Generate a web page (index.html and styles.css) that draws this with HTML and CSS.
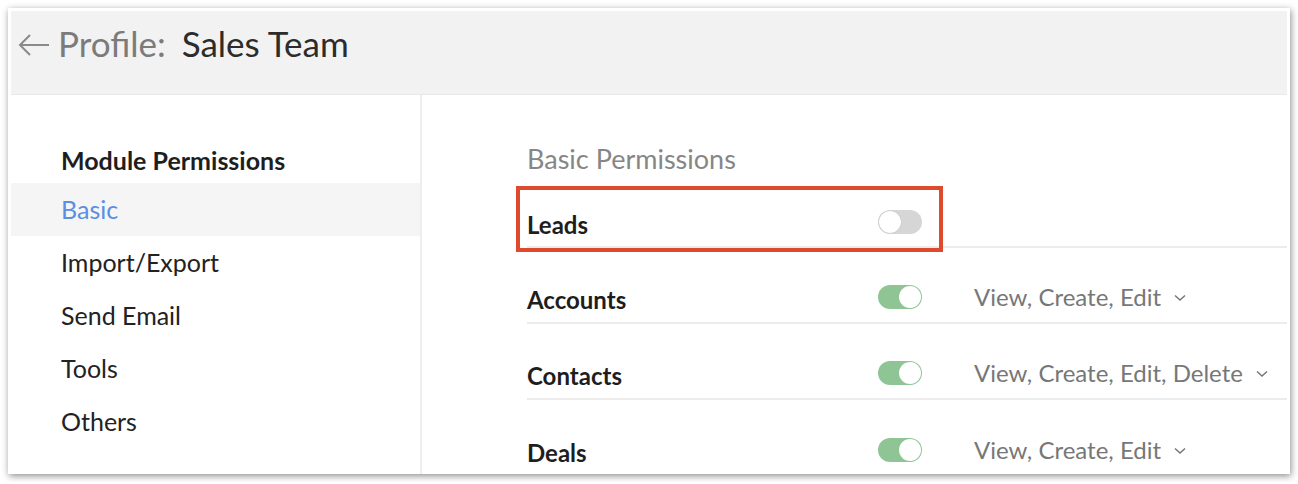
FILE: index.html
```html
<!DOCTYPE html>
<html>
<head>
<meta charset="utf-8">
<link rel="stylesheet" href="styles.css">
</head>
<body>
<div class="card">
  <div class="header">
    <svg class="back" width="32" height="24" viewBox="0 0 32 24"><path d="M2 12 H31 M12 2 L2 12 L12 22" fill="none" stroke="#8a8a8a" stroke-width="2"/></svg>
    <span class="crumb">Profile:</span>
    <span class="title">Sales Team</span>
  </div>
  <div class="main">
    <div class="sidebar">
      <div class="side-title">Module Permissions</div>
      <div class="side-item active">Basic</div>
      <div class="side-item">Import/Export</div>
      <div class="side-item">Send Email</div>
      <div class="side-item">Tools</div>
      <div class="side-item">Others</div>
    </div>
    <div class="content">
      <div class="section-title">Basic Permissions</div>
      <div class="row first">
        <div class="label">Leads</div>
        <div class="toggle off"><span class="knob"></span></div>
        <div class="highlight"></div>
      </div>
      <div class="row">
        <div class="label">Accounts</div>
        <div class="toggle on"><span class="knob"></span></div>
        <div class="perm">View, Create, Edit <svg class="chev" width="12" height="8" viewBox="0 0 12 8"><path d="M1 1.5 L6 6 L11 1.5" fill="none" stroke="#777" stroke-width="1.5"/></svg></div>
      </div>
      <div class="row">
        <div class="label">Contacts</div>
        <div class="toggle on"><span class="knob"></span></div>
        <div class="perm">View, Create, Edit, Delete <svg class="chev" width="12" height="8" viewBox="0 0 12 8"><path d="M1 1.5 L6 6 L11 1.5" fill="none" stroke="#777" stroke-width="1.5"/></svg></div>
      </div>
      <div class="row last">
        <div class="label">Deals</div>
        <div class="toggle on"><span class="knob"></span></div>
        <div class="perm">View, Create, Edit <svg class="chev" width="12" height="8" viewBox="0 0 12 8"><path d="M1 1.5 L6 6 L11 1.5" fill="none" stroke="#777" stroke-width="1.5"/></svg></div>
      </div>
    </div>
  </div>
</div>
</body>
</html>
```
FILE: styles.css
```css
html, body {
  margin: 0;
  padding: 0;
  background: #ffffff;
}
body {
  padding: 8px;
  font-family: Lato, "Open Sans", "Liberation Sans", sans-serif;
}
.card {
  width: 1276px;
  height: 463px;
  padding: 3px 3px 0 3px;
  background: #fff;
  box-shadow: 1px 2px 7px rgba(0,0,0,0.45);
  overflow: hidden;
}
.header {
  background: #f2f2f2;
  border-bottom: 1px solid #e9e9e9;
  display: flex;
  align-items: flex-start;
  padding-left: 7px;
  padding-top: 11px;
  box-sizing: border-box;
  height: 84px;
}
.back {
  margin-right: 8px;
  margin-top: 11px;
}
.crumb {
  font-size: 35px;
  line-height: 42px;
  color: #7b7b7b;
  margin-right: 16px;
}
.title {
  font-size: 35px;
  line-height: 42px;
  color: #2c2c2c;
}
.main {
  display: flex;
  height: 379px;
}
.sidebar {
  width: 409px;
  border-right: 2px solid #eeeeee;
  padding-top: 50px;
}
.side-title {
  font-size: 25px;
  font-weight: bold;
  color: #1e1e1e;
  line-height: 30px;
  padding-left: 50px;
  margin-bottom: 8px;
}
.side-item {
  font-size: 25px;
  color: #222;
  height: 53px;
  line-height: 52px;
  padding-left: 50px;
}
.side-item.active {
  background: #f5f5f5;
  color: #5a8fe3;
}
.content {
  flex: 1;
  padding-left: 105px;
  padding-top: 50px;
}
.section-title {
  font-size: 27px;
  color: #868686;
  line-height: 28px;
  height: 27px;
}
.row {
  position: relative;
  display: flex;
  align-items: center;
  padding-top: 30px;
  box-sizing: border-box;
  height: 76px;
  border-bottom: 2px solid #ececec;
}
.row.first {
  padding-top: 32px;
}
.row.last {
  border-bottom: none;
}
.label {
  width: 351px;
  font-size: 24px;
  font-weight: bold;
  color: #1e1e1e;
  line-height: 28px;
}
.toggle {
  width: 44px;
  height: 24px;
  border-radius: 12px;
  position: relative;
  margin-top: -6px;
}
.toggle.off {
  background: #d6d6d6;
}
.toggle.on {
  background: #8fc594;
}
.knob {
  position: absolute;
  top: 1px;
  width: 22px;
  height: 22px;
  border-radius: 50%;
  background: #fff;
}
.toggle.off .knob {
  left: 1px;
  box-shadow: 0 0 1px rgba(0,0,0,0.25);
}
.toggle.on .knob {
  right: 1px;
}
.perm {
  margin-left: 52px;
  font-size: 24px;
  color: #777;
  line-height: 28px;
  display: flex;
  align-items: center;
  margin-top: -6px;
}
.chev {
  margin-left: 13px;
  margin-top: 2px;
}
.highlight {
  position: absolute;
  left: -11px;
  top: 14px;
  width: 427px;
  height: 66px;
  border: 4px solid #de4a2e;
  box-sizing: border-box;
  z-index: 2;
}
```
